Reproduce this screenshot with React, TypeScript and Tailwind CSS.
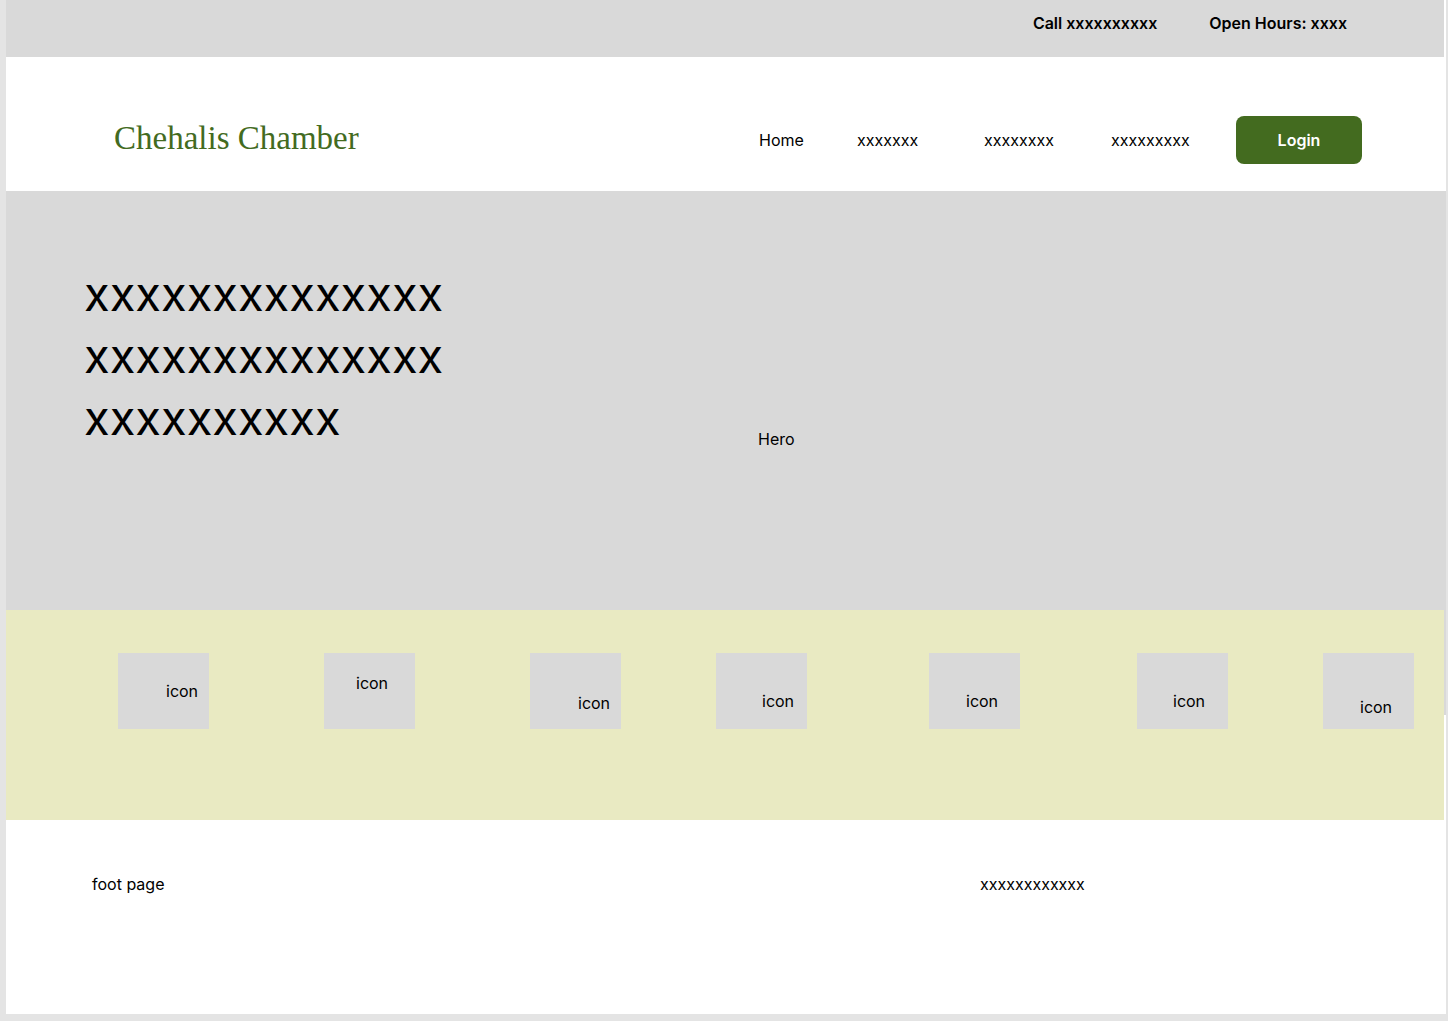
const navLinks = ["Home", "xxxxxxx", "xxxxxxxx", "xxxxxxxxx"];

const tiles = [
  "pl-12 pt-[26px]",
  "pl-8 pt-[18px]",
  "pl-12 pt-[38px]",
  "pl-[46px] pt-[36px]",
  "pl-[37px] pt-[36px]",
  "pl-[36px] pt-[36px]",
  "pl-[37px] pt-[42px]",
];

function TopBar() {
  return (
    <div className="mr-0.5 flex justify-end gap-[52px] bg-[#d9d9d9] pt-[11px] pr-[97px] pb-[22px] font-semibold">
      <p>Call xxxxxxxxxx</p>
      <p>Open Hours: xxxx</p>
    </div>
  );
}

function Header() {
  return (
    <header className="flex items-center justify-between pt-[59px] pr-[84px] pb-[27px] pl-[108px]">
      <a
        href="#"
        className="pb-1 font-['Liberation_Serif',serif] text-[33px] leading-[44px] text-[#436b1f]"
      >
        Chehalis Chamber
      </a>
      <div className="flex items-center">
        <nav className="grid grid-cols-[98px_127px_127px_125px]">
          {navLinks.map((label) => (
            <a key={label} href="#">
              {label}
            </a>
          ))}
        </nav>
        <button
          type="button"
          className="h-12 w-[126px] rounded-lg bg-[#436b1f] font-semibold text-white"
        >
          Login
        </button>
      </div>
    </header>
  );
}

function Hero() {
  return (
    <section className="grid grid-cols-[674fr_688fr] bg-[#d9d9d9] pt-[72px] pb-[159px] pl-[78px]">
      <h1 className="text-[47px] leading-[62px]">
        xxxxxxxxxxxxxx
        <br />
        xxxxxxxxxxxxxx
        <br />
        xxxxxxxxxx
      </h1>
      <p className="pt-[164px]">Hero</p>
    </section>
  );
}

function IconStrip() {
  return (
    <section className="flex items-start">
      <ul className="grid flex-1 grid-cols-[206fr_206fr_186fr_213fr_208fr_186fr_91px] bg-[#e9eac2] pt-[43px] pr-[30px] pb-[91px] pl-28">
        {tiles.map((place, i) => (
          <li key={i}>
            <div className={`h-[76px] w-[91px] bg-[#d9d9d9] ${place}`}>icon</div>
          </li>
        ))}
      </ul>
      <div className="h-[105px] w-0.5 bg-[#d9d9d9]" />
    </section>
  );
}

function Footer() {
  return (
    <footer className="grid grid-cols-[888fr_466fr] pt-[52px] pb-[118px] pl-[86px]">
      <p>foot page</p>
      <p>xxxxxxxxxxxx</p>
    </footer>
  );
}

export default function App() {
  return (
    <div className="min-h-screen bg-[#e4e4e4] pr-0.5 pb-[7px] pl-1.5 font-['Inter',sans-serif] text-base text-black">
      <div className="bg-white">
        <TopBar />
        <Header />
        <main>
          <Hero />
          <IconStrip />
        </main>
        <Footer />
      </div>
    </div>
  );
}
